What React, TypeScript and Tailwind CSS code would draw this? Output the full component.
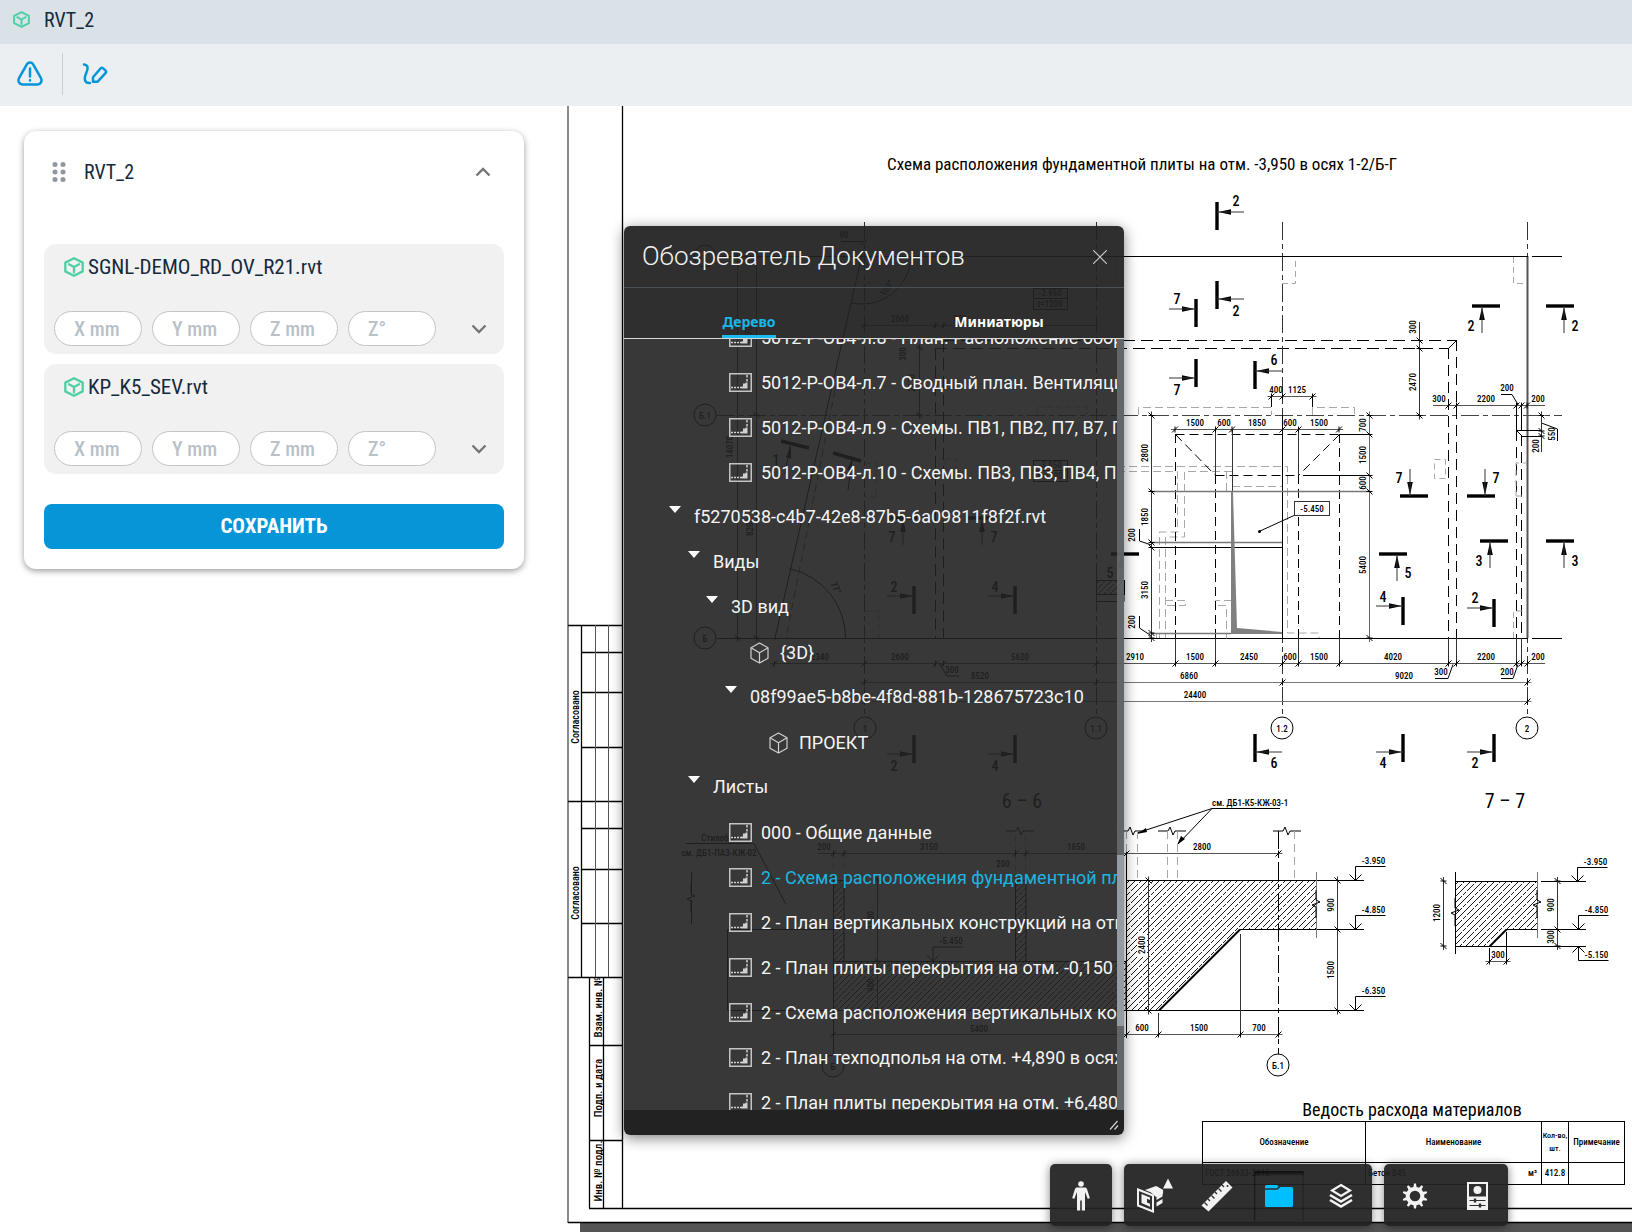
import React from 'react';

type Pt = [number, number];

/* ---------- small icons ---------- */

function Cube({ className }: { className: string }) {
  return (
    <svg viewBox="0 0 20 20" className={className} fill="none" stroke="#4fcfa5" strokeWidth="2.3" strokeLinejoin="round" strokeLinecap="round" aria-hidden="true">
      <path d="M10 1.2 18.700 5.600v8.800L10 18.800 1.300 14.400V5.600Z" />
      <path d="M5 7.300 10 10l5-2.700M10 10v5.500" />
    </svg>
  );
}

function Chevron({ up }: { up?: boolean }) {
  return (
    <svg viewBox="0 0 16 10" className="h-[10px] w-4" fill="none" stroke="#757575" strokeWidth="2.4" aria-hidden="true">
      <path d={up ? 'M1.5 8.5 8 2l6.5 6.5' : 'M1.5 1.5 8 8l6.5-6.5'} />
    </svg>
  );
}

function SheetIcon() {
  return (
    <svg viewBox="0 0 23 19" className="mb-px h-[19px] w-[23px] shrink-0" fill="none" aria-hidden="true">
      <rect x="0.75" y="0.75" width="21.5" height="17.5" stroke="#c4c4c4" strokeWidth="1.5" />
      <path d="M2 14.500h11" stroke="#d0d0d0" strokeWidth="1.5" strokeDasharray="2 1" />
      <path d="M18 2v7" stroke="#d0d0d0" strokeWidth="1.5" strokeDasharray="2.500 1.500" />
      <path d="M18.500 9.500v6h-6v-2h1.500v-3h2.500v-1Z" fill="#d0d0d0" />
    </svg>
  );
}

function ModelIcon() {
  return (
    <svg viewBox="0 0 19 22" className="h-[22px] w-[19px] shrink-0" fill="none" stroke="#d0d0d0" strokeWidth="1.2" strokeLinejoin="round" aria-hidden="true">
      <path d="M9.5 1 18 5.8v10.4L9.5 21 1 16.2V5.8Z" />
      <path d="m1 5.8 8.5 5L18 5.8M9.5 10.8V21" />
    </svg>
  );
}

/* ---------- drawing primitives ---------- */

function L({ d, c = '#000', w = 1, dash }: { d: string; c?: string; w?: number; dash?: string }) {
  return <path d={d} stroke={c} strokeWidth={w} strokeDasharray={dash} fill="none" />;
}

function Tx({ x, y, s = 9, v, children }: { x: number; y: number; s?: number; v?: boolean | number; children: React.ReactNode }) {
  const angle = v === true ? -90 : v || 0;
  return (
    <text x={x} y={y} fontSize={s} fontWeight={s > 15 ? 400 : 500} textAnchor="middle" dominantBaseline="central" transform={angle ? `rotate(${angle} ${x} ${y})` : undefined}>
      {children}
    </text>
  );
}

function HDim({ y, at, from, to, c = '#555' }: { y: number; at: number[]; from?: number; to?: number; c?: string }) {
  return (
    <g>
      <L d={`M${from ?? at[0] - 4} ${y}H${to ?? at[at.length - 1] + 4}`} c={c} />
      <L d={at.map((x) => `M${x - 3} ${y + 3}l6 -6M${x} ${y - 3}v6`).join('')} w={1} />
    </g>
  );
}

function VDim({ x, at, from, to, c = '#333' }: { x: number; at: number[]; from?: number; to?: number; c?: string }) {
  return (
    <g>
      <L d={`M${x} ${from ?? at[0] - 4}V${to ?? at[at.length - 1] + 4}`} c={c} />
      <L d={at.map((y) => `M${x - 3} ${y - 3}l6 6M${x - 3} ${y}h6`).join('')} w={1} />
    </g>
  );
}

/* Section cut mark: thick bar, thin shaft and solid arrow head touching the bar. */
function Cut({ bar, dir, label, at, off = 0 }: { bar: Pt; dir: 'left' | 'right' | 'up' | 'down'; label: string; at: Pt; off?: number }) {
  const rot = { left: 0, up: 90, right: 180, down: 270 }[dir];
  const upright = dir === 'left' || dir === 'right';
  const [x, y] = bar;
  const ax = upright ? x : x + off;
  const ay = upright ? y + off : y;
  return (
    <g>
      <L d={upright ? `M${x} ${y - 14}v28` : `M${x - 14} ${y}h28`} w={3.4} />
      <g transform={`rotate(${rot} ${ax} ${ay})`}>
        <path d={`M${ax + 1} ${ay}l13 -2.8v5.6Z`} />
        <L d={`M${ax} ${ay}h27`} c="#333" />
      </g>
      <Tx x={at[0]} y={at[1]} s={14}>{label}</Tx>
    </g>
  );
}

function Axis({ x, y, label }: { x: number; y: number; label: string }) {
  return (
    <g>
      <circle cx={x} cy={y} r="11" fill="none" stroke="#000" />
      <Tx x={x} y={y + 0.5} s={9}>{label}</Tx>
    </g>
  );
}

function Level({ x, y, label, flip }: { x: number; y: number; label: string; flip?: boolean }) {
  const k = flip ? -1 : 1;
  return (
    <g>
      <L d={`M${x - 6} ${y - 6 * k}l6 ${6 * k}l6 ${-6 * k}M${x} ${y}v${-14 * k}h30`} />
      <Tx x={x + 18} y={flip ? y + 8 : y - 20}>{label}</Tx>
    </g>
  );
}

function Break({ x, y, v }: { x: number; y: number; v?: boolean }) {
  return (
    <g transform={v ? `rotate(90 ${x} ${y})` : undefined}>
      <L d={`M${x - 14} ${y}h10l2 -4l3 8l2 -4h11`} />
    </g>
  );
}

const GRAY = '#a8a8a8';
const AX = '18 4 5 4';

function PlanLeft() {
  return (
    <g>
      <L d="M717 256.5H1282M717 638.5H1282" />
      <L d="M717 415.5H1562" dash={AX} c="#444" />
      <Axis x={705} y={256} label="Г" />
      <Axis x={705} y={415} label="Б.1" />
      <Axis x={705} y={638} label="Б" />
      <L d="M863 250 774.6 640" />
      <L d="M835 390 786 638" c="#555" dash="8 4" />
      <VDim x={737.5} at={[256, 638]} />
      <VDim x={756.5} at={[256, 415, 638]} />
      <L d="M911 256A49 49 0 0 1 852 303" />
      <L d="M789.7 568.7A71 71 0 0 1 845.6 638" />
      <Tx x={887} y={288} v={-55}>103°</Tx>
      <Tx x={836} y={588} v={60}>77°</Tx>
      <Tx x={844} y={235}>90</Tx>
      <L d="M841 241.5h25M861 245l6-6" />
      <HDim y={325.5} at={[864.5, 935.5, 943.5]} to={1096} />
      <Tx x={900} y={319}>2600</Tx>
      <Tx x={960} y={319}>300</Tx>
      {[288, 460].map((y) => (
        <g key={y}>
          <rect x="1033.5" y={y + 0.5} width="34" height="21" fill="none" stroke="#000" />
          <L d={`M1033 ${y + 10.5}h34`} />
          <Tx x={1050} y={y + 5}>-3.950</Tx>
          <Tx x={1050} y={y + 16}>t=1200</Tx>
        </g>
      ))}
      <L d="M943 340.5H1456M935 348.5H1448M935.5 348V638M943.5 340V638" dash="12 6" />
      <VDim x={919.5} at={[348, 415]} />
      <Tx x={903} y={354} v>300</Tx>
      <Tx x={912} y={383} v>2470</Tx>
      <Tx x={730} y={447} v>14070</Tx>
      <Tx x={749} y={335} v>5870</Tx>
      <Tx x={750} y={527} v>8200</Tx>
      <L d="M781 441l28 7M833 453l28 8" w={3.4} />
      <L d="M790 446l-5 28M852 460l-4 30" />
      <path d="M791 446l-5 11 5 2ZM852 459l-5 11 5 2Z" />
      <Tx x={776} y={460} s={14}>1</Tx>
      <L d="M865 463h11v34h-11M945 459h11v10h-11ZM865 283h15v-26M1101 283h15v-26M1037 415v-8h50v8M865 611h14v27" c={GRAY} dash="6 3" />
      <Cut bar={[903, 518]} dir="up" label="7" at={[892, 537]} />
      <Cut bar={[982, 518]} dir="up" label="7" at={[994, 537]} />
      <Cut bar={[914, 600]} dir="right" off={-4} label="2" at={[894, 587]} />
      <Cut bar={[1015, 600]} dir="right" off={-4} label="4" at={[995, 587]} />
      <Cut bar={[914, 749]} dir="right" off={5} label="2" at={[894, 766]} />
      <Cut bar={[1015, 749]} dir="right" off={5} label="4" at={[995, 766]} />
      <Tx x={820} y={657}>2340</Tx>
      <Tx x={900} y={657}>2600</Tx>
      <Tx x={952} y={670}>300</Tx>
      <L d="M939 663l8 13h12" />
      <Tx x={1020} y={657}>5620</Tx>
      <Tx x={980} y={676}>8520</Tx>
      <rect x="1096.500" y="580.500" width="28" height="14" fill="url(#hatch)" stroke="#000" />
      <L d="M1096 601.5h28v-8" />
    </g>
  );
}

function PlanRight() {
  return (
    <g>
      {/* grid axes */}
      {[864.5, 1096.5, 1282.5, 1527.5].map((x) => (
        <L key={x} d={`M${x} 222V717`} dash={AX} c="#333" />
      ))}
      <L d="M1527.5 256V638" c="#555" w={2} />
      <Axis x={865} y={728} label="1" />
      <Axis x={1096} y={728} label="1.1" />
      <Axis x={1282} y={728} label="1.2" />
      <Axis x={1527} y={728} label="2" />
      <L d="M1282 256.5H1528M1532 256.5H1562M1282 638.5H1528M1532 638.5H1562" />
      <L d="M1282.5 415V638" />

      {/* hidden contours */}
      <L d="M1448.5 348V663M1456.5 340V663M1516.5 430V638M1521.5 435V638" dash="11 6" />
      <L d="M1516.5 405V430M1521.5 405V430M1448.5 348.5l8-8" />
      <L d="M1138.5 415v-7.500h133v7.500M1312.5 415v-7.500h42v7.500M1117 466.500h170.500V633H1319v5M1117 471.500h60.500V532h-18v106M1232 471.500h-47.500V537h-19v101M1165 600.500h20.500v5h-20M1226.500 471v20M1232 486.500h50M1232 600.500h-16.500v5h11v33M1156.500 638v-5" c={GRAY} dash="8 4" />
      <L d="M1434.500 459.500h11v19h-11ZM1516 496v-33h11M1516 496h11M1513.500 638v-27h13M1282 283.500h13.500v-26M1513.500 257v26.500h13" c={GRAY} dash="6 4" />
      <L d="M1175.500 434.500H1339.500M1215.500 475.500H1298.500M1175.500 434.500l40 41M1339.500 434.500l-41 41M1175.500 434V638M1215.500 475V638M1298.500 475V638M1339.500 434V638" dash="9 5" />
      <L d="M1175.500 638v25M1215.500 638v25M1298.500 638v25M1339.500 638v25M1448.500 638v25M1456.500 638v25M1516.500 638v25M1521.500 638v25M1215.500 429v46M1298.500 429v46M1232.500 429v62" c="#333" />
      <L d="M1151 491.500h218M1151 542.500h131M1151 633.500h80" c="#777" w={1.500} />
      <L d="M1151 547.500h131M1339 434.500h30M1303 475.500h66" />
      <path d="M1231 492h2l4 136 45 4v2h-51Z" fill="#808080" />

      {/* dimensions */}
      <VDim x={1151.500} at={[415.500, 491.500, 542.500, 547.500, 633, 638]} />
      <Tx x={1145} y={453} v>2800</Tx>
      <Tx x={1145} y={517} v>1850</Tx>
      <Tx x={1145} y={590} v>3150</Tx>
      <Tx x={1132} y={535} v>200</Tx>
      <Tx x={1132} y={622} v>200</Tx>
      <L d="M1139.500 529v12l12 4M1139.500 616v12l12 8" />
      <HDim y={429.500} at={[1175, 1215.500, 1232, 1282.500, 1298.500, 1339]} />
      <Tx x={1195} y={423}>1500</Tx>
      <Tx x={1224} y={423}>600</Tx>
      <Tx x={1257} y={423}>1850</Tx>
      <Tx x={1290} y={423}>600</Tx>
      <Tx x={1319} y={423}>1500</Tx>
      <HDim y={396.500} at={[1271.500, 1282.500, 1312.500]} />
      <L d="M1271.500 396v11M1312.500 396v11" />
      <Tx x={1276} y={390}>400</Tx>
      <Tx x={1297} y={390}>1125</Tx>
      <VDim x={1369.500} at={[415.500, 434.500, 475.500, 491.500, 638]} c="#666" />
      <Tx x={1363} y={425} v>700</Tx>
      <Tx x={1363} y={455} v>1500</Tx>
      <Tx x={1363} y={483} v>600</Tx>
      <Tx x={1363} y={565} v>5400</Tx>
      <VDim x={1419.500} at={[340.500, 348.500, 415.500]} from={322} />
      <Tx x={1413} y={327} v>300</Tx>
      <Tx x={1413} y={382} v>2470</Tx>
      <HDim y={405.500} at={[1448.500, 1456.500, 1516.500, 1521.500, 1527]} from={1433} to={1545} />
      <Tx x={1439} y={399}>300</Tx>
      <Tx x={1486} y={399}>2200</Tx>
      <Tx x={1507} y={388}>200</Tx>
      <Tx x={1538} y={399}>200</Tx>
      <L d="M1501 394.500h11l6 10M1516 430.500h26M1521 436.500h21M1516 430l6 6M1541.500 423l16 6v12" />
      <VDim x={1541.500} at={[415.500, 431, 436]} to={452} />
      <Tx x={1552} y={434} v>550</Tx>
      <Tx x={1536} y={446} v>200</Tx>
      <rect x="1294.500" y="501.500" width="35" height="14" fill="#fff" stroke="#333" />
      <Tx x={1312} y={509}>-5.450</Tx>
      <L d="M1294 515.500l-35 16" />
      <circle cx="1259.500" cy="531.500" r="1.500" />

      <HDim y={663.500} at={[774.500, 864.500, 935.500, 943.500, 1096.500, 1175.500, 1215.500, 1282.500, 1298.500, 1339.500, 1448.500, 1456.500, 1516.500, 1521.500, 1527.500]} to={1545} />
      <HDim y={682.500} at={[864.500, 1096.500, 1282.500, 1527.500]} c="#777" />
      <HDim y={701.500} at={[864.500, 1527.500]} c="#777" />
      <Tx x={1135} y={657}>2910</Tx>
      <Tx x={1195} y={657}>1500</Tx>
      <Tx x={1249} y={657}>2450</Tx>
      <Tx x={1290} y={657}>600</Tx>
      <Tx x={1319} y={657}>1500</Tx>
      <Tx x={1393} y={657}>4020</Tx>
      <Tx x={1486} y={657}>2200</Tx>
      <Tx x={1538} y={657}>200</Tx>
      <Tx x={1441} y={672}>300</Tx>
      <Tx x={1507} y={672}>200</Tx>
      <L d="M1435 678.500h13l5 -14M1501 678.500h12l5 -14" />
      <Tx x={1189} y={676}>6860</Tx>
      <Tx x={1404} y={676}>9020</Tx>
      <Tx x={1195} y={695}>24400</Tx>

      {/* section marks */}
      <Cut bar={[1217, 216]} dir="left" off={-4} label="2" at={[1236, 201]} />
      <Cut bar={[1217, 295]} dir="left" off={4} label="2" at={[1236, 311]} />
      <Cut bar={[1196, 313]} dir="right" off={-4} label="7" at={[1177, 299]} />
      <Cut bar={[1196, 373]} dir="right" off={5} label="7" at={[1177, 390]} />
      <Cut bar={[1255, 375]} dir="left" off={-4} label="6" at={[1274, 360]} />
      <Cut bar={[1486, 306]} dir="up" off={-4} label="2" at={[1471, 326]} />
      <Cut bar={[1560, 306]} dir="up" off={4} label="2" at={[1575, 326]} />
      <Cut bar={[1414, 496]} dir="down" off={-4} label="7" at={[1399, 478]} />
      <Cut bar={[1481, 496]} dir="down" off={4} label="7" at={[1496, 478]} />
      <Cut bar={[1494, 541]} dir="up" off={-4} label="3" at={[1479, 561]} />
      <Cut bar={[1560, 541]} dir="up" off={4} label="3" at={[1575, 561]} />
      <Cut bar={[1125, 554]} dir="up" off={-4} label="5" at={[1110, 573]} />
      <Cut bar={[1393, 554]} dir="up" off={4} label="5" at={[1408, 573]} />
      <Cut bar={[1403, 611]} dir="right" off={-5} label="4" at={[1383, 597]} />
      <Cut bar={[1494, 613]} dir="right" off={-5} label="2" at={[1475, 598]} />
      <Cut bar={[1255, 748]} dir="left" off={4} label="6" at={[1274, 763]} />
      <Cut bar={[1403, 748]} dir="right" off={4} label="4" at={[1383, 763]} />
      <Cut bar={[1494, 748]} dir="right" off={4} label="2" at={[1475, 763]} />
    </g>
  );
}

function Sections() {
  return (
    <g>
      <Tx x={1022} y={801} s={20}>6 – 6</Tx>
      <Tx x={1505} y={801} s={20}>7 – 7</Tx>

      {/* section 6-6 */}
      <Tx x={719} y={838}>Стилобат</Tx>
      <Tx x={719} y={853}>см. ДБ1-ПАЗ-КЖ-02</Tx>
      <L d="M686 843.500h68l32 61M691.500 872v24M691.500 900v24" />
      <Break x={691} y={898} v />
      <L d="M833 929.500H727.500V1010.500H833" />
      <rect x="833.500" y="880.500" width="10.500" height="81" fill="url(#hatch)" stroke="#000" />
      <rect x="1015.500" y="880.500" width="10.500" height="81" fill="url(#hatch)" stroke="#000" />
      <path d="M833.500 961.500H1126V1010.500H833.500Z" fill="url(#hatch)" stroke="#000" />
      <L d="M833.500 853v27M844 853v27M1015.500 835v45M1025.500 835v45" c={GRAY} dash="6 4" />
      <HDim y={853.500} at={[833.500, 844, 1015.500, 1026, 1126.500, 1278.500]} from={818} />
      <Break x={1020} y={831} />
      <Tx x={824} y={847}>200</Tx>
      <Tx x={929} y={847}>3150</Tx>
      <Tx x={1003} y={864}>200</Tx>
      <Tx x={1076} y={847}>1850</Tx>
      <Tx x={1202} y={847}>2800</Tx>
      <VDim x={877.500} at={[880, 961, 1010]} />
      <Tx x={871} y={920} v>1500</Tx>
      <Tx x={871} y={985} v>900</Tx>
      <Level x={933} y={961} label="-5.450" />
      <L d="M833.500 1010V1055M1126.500 853V1038" />
      <Axis x={833} y={1066} label="Б" />
      <Tx x={979} y={1029}>5400</Tx>

      <text x="1212" y="806" fontSize="9" fontWeight="500">см. ДБ1-К5-КЖ-03-1</text>
      <L d="M1280 808.500H1212L1137 833M1212 808.500 1178 844" />
      <path d="M1137 834l9-6 1 4ZM1177 845l4-9 4 3Z" />
      <Break x={1132} y={831} />
      <Break x={1172} y={831} />
      <Break x={1287} y={831} />
      <L d="M1126.500 831v22M1137.500 831v49M1167.500 831v49M1177.500 831v49M1294.500 831v49" c={GRAY} dash="8 5" />
      <path d="M1126.500 880.500H1316.500V929.500H1240L1159 1010.500H1126.500Z" fill="url(#hatch)" />
      <rect x="1137" y="933" width="10" height="24" fill="#fff" />
      <L d="M1126 880.500H1364M1240 929.500H1364M1126 1010.500H1364" />
      <L d="M1240 929.500 1159 1010.500" w={2} />
      <L d="M1316.500 872v66" c="#777" />
      <Break x={1316} y={904} v />
      <L d="M1278.500 831V1054" dash={AX} />
      <L d="M1240.500 934v102M1158.500 1013v23" c="#333" />
      <VDim x={1148.500} at={[880.500, 1010.500]} />
      <Tx x={1142} y={945} v>2400</Tx>
      <VDim x={1337.500} at={[880.500, 929.500, 1010.500]} />
      <Tx x={1331} y={905} v>900</Tx>
      <Tx x={1331} y={970} v>1500</Tx>
      <HDim y={1034.500} at={[833.500, 1126.500, 1158.500, 1240.500, 1278.500]} />
      <Tx x={1142} y={1028}>600</Tx>
      <Tx x={1199} y={1028}>1500</Tx>
      <Tx x={1259} y={1028}>700</Tx>
      <Axis x={1278} y={1065} label="Б.1" />
      <Level x={1355.500} y={880.500} label="-3.950" />
      <Level x={1355.500} y={929.500} label="-4.850" />
      <Level x={1355.500} y={1010.500} label="-6.350" />

      {/* section 7-7 */}
      <path d="M1455.500 881.500H1537.500V929.500H1506.500L1489.500 946.500H1455.500Z" fill="url(#hatch)" />
      <L d="M1455 881.500H1538M1541 881.500h45M1506 929.500H1538M1541 929.500h45M1455 946.500h131M1455.500 872v82" />
      <L d="M1506.500 929.500l-17 17" w={2} />
      <L d="M1537.500 872v66" c="#777" />
      <Break x={1455} y={912} v />
      <Break x={1537} y={904} v />
      <VDim x={1443.500} at={[881, 946]} />
      <Tx x={1437} y={913} v>1200</Tx>
      <VDim x={1557.500} at={[881, 929.500, 946]} />
      <Tx x={1551} y={905} v>900</Tx>
      <Tx x={1551} y={937} v>300</Tx>
      <HDim y={961.500} at={[1489.500, 1506.500]} />
      <L d="M1489.500 948v13M1506.500 932v29" />
      <Tx x={1498} y={955}>300</Tx>
      <Level x={1577.500} y={881.500} label="-3.950" />
      <Level x={1578.500} y={929.500} label="-4.850" />
      <Level x={1578.500} y={946.500} label="-5.150" flip />
    </g>
  );
}

function SheetFrame() {
  return (
    <g>
      <rect x="580" y="1223" width="1052" height="9" fill="#545454" />
      <L d="M568 106V1223" c="#8a8a8a" w={2} />
      <L d="M568 1222.500H1632M589 1208.500H1632M622.500 106V1208.500" w={1.300} />
      <L d="M581.500 625V977M589.500 977V1208M603.500 977V1208M568 625.500h54M568 801.500h54M568 977.500h54M581 652.500h41M581 692.500h41M581 747.500h41M581 828.500h41M581 869.500h41M581 923.500h41M589 1045.500h33M589 1140.500h33" w={1.300} />
      <L d="M595.500 625V977M608.500 625V977" c="#555" />
      <Tx x={575} y={717} s={10} v>Согласовано</Tx>
      <Tx x={575} y={893} s={10} v>Согласовано</Tx>
      <Tx x={598} y={1007} s={11} v>Взам. инв. №</Tx>
      <Tx x={598} y={1088} s={11} v>Подп. и дата</Tx>
      <Tx x={598} y={1171} s={11} v>Инв. № подл.</Tx>
      <Tx x={1142} y={164} s={17}>Схема расположения фундаментной плиты на отм. -3,950 в осях 1-2/Б-Г</Tx>
      <Tx x={1412} y={1109} s={18}>Ведость расхода материалов</Tx>
    </g>
  );
}

function MaterialsTable() {
  return (
    <foreignObject x="1202" y="1121" width="423" height="66">
      <table className="w-full table-fixed border-collapse text-center text-[9px] leading-[13px] font-medium text-black">
        <colgroup>
          <col className="w-[163px]" />
          <col className="w-[176px]" />
          <col className="w-[27px]" />
          <col />
        </colgroup>
        <thead>
          <tr className="h-[41px]">
            <th className="border border-black p-0 font-medium">Обозначение</th>
            <th className="border border-black p-0 font-medium">Наименование</th>
            <th className="border border-black p-0 text-[8px] font-medium whitespace-nowrap">
              Кол-во,
              <br />
              шт.
            </th>
            <th className="border border-black p-0 font-medium">Примечание</th>
          </tr>
        </thead>
        <tbody>
          <tr className="h-[22px]">
            <td className="border border-black px-[2px] py-0 text-left">ГОСТ 26633-2015</td>
            <td className="border border-black px-[2px] py-0">
              <span className="flex justify-between pr-[2px]">
                <span>Бетон B45</span>
                <span>м³</span>
              </span>
            </td>
            <td className="border border-black p-0">412.8</td>
            <td className="border border-black p-0" />
          </tr>
        </tbody>
      </table>
    </foreignObject>
  );
}

function Drawing() {
  return (
    <svg viewBox="548 106 1084 1126" preserveAspectRatio="xMinYMin meet" className="absolute inset-0 h-full w-full font-['Roboto_Condensed',sans-serif]">
      <defs>
        <pattern id="hatch" width="12" height="12" patternUnits="userSpaceOnUse">
          <path d="M-1 13 13 -1M-1 1 1 -1M11 13 13 11" stroke="#000" strokeWidth="0.900" />
          <path d="M-1 7 2 4M3 3 7 -1M5 13 10 8M11 7 13 5" stroke="#000" strokeWidth="0.900" />
        </pattern>
      </defs>
      <SheetFrame />
      <PlanLeft />
      <PlanRight />
      <Sections />
      <MaterialsTable />
    </svg>
  );
}

/* ---------- document browser ---------- */

type Row = { kind: 'group' | 'model' | 'sheet'; label: string; pad: string; active?: boolean };

const rows: Row[] = [
  { kind: 'sheet', pad: 'pl-[105px]', label: '5012-Р-ОВ4-л.8 - План. Расположение оборудования' },
  { kind: 'sheet', pad: 'pl-[105px]', label: '5012-Р-ОВ4-л.7 - Сводный план. Вентиляция' },
  { kind: 'sheet', pad: 'pl-[105px]', label: '5012-Р-ОВ4-л.9 - Схемы. ПВ1, ПВ2, П7, В7, ПВ8' },
  { kind: 'sheet', pad: 'pl-[105px]', label: '5012-Р-ОВ4-л.10 - Схемы. ПВ3, ПВ3, ПВ4, ПВ5' },
  { kind: 'group', pad: 'pl-[45px]', label: 'f5270538-c4b7-42e8-87b5-6a09811f8f2f.rvt' },
  { kind: 'group', pad: 'pl-[64px]', label: 'Виды' },
  { kind: 'group', pad: 'pl-[82px]', label: '3D вид' },
  { kind: 'model', pad: 'pl-[126px]', label: '{3D}' },
  { kind: 'group', pad: 'pl-[101px]', label: '08f99ae5-b8be-4f8d-881b-128675723c10' },
  { kind: 'model', pad: 'pl-[145px]', label: 'ПРОЕКТ' },
  { kind: 'group', pad: 'pl-[64px]', label: 'Листы' },
  { kind: 'sheet', pad: 'pl-[105px]', label: '000 - Общие данные' },
  { kind: 'sheet', pad: 'pl-[105px]', label: '2 - Схема расположения фундаментной плиты', active: true },
  { kind: 'sheet', pad: 'pl-[105px]', label: '2 - План вертикальных конструкций на отм. -3,950' },
  { kind: 'sheet', pad: 'pl-[105px]', label: '2 - План плиты перекрытия на отм. -0,150' },
  { kind: 'sheet', pad: 'pl-[105px]', label: '2 - Схема расположения вертикальных конструкций' },
  { kind: 'sheet', pad: 'pl-[105px]', label: '2 - План техподполья на отм. +4,890 в осях' },
  { kind: 'sheet', pad: 'pl-[105px]', label: '2 - План плиты перекрытия на отм. +6,480' },
];

const rowKind = {
  group: 'gap-[13px] pb-[2px]',
  model: 'gap-[11px]',
  sheet: 'gap-[9px]',
};

function TreeRow({ row }: { row: Row }) {
  return (
    <li className={`flex h-[45px] items-center whitespace-nowrap ${row.pad} ${rowKind[row.kind]} ${row.active ? 'text-[#1cb5e0]' : 'text-[#f4f4f4]'}`}>
      {row.kind === 'group' && (
        <button type="button" aria-label={`Свернуть ${row.label}`} className="mb-[14px] w-3 shrink-0">
          <svg viewBox="0 0 12 7" className="h-[7px] w-3" aria-hidden="true">
            <path d="M0 0h12L6 7Z" fill="#fff" />
          </svg>
        </button>
      )}
      {row.kind === 'model' && <ModelIcon />}
      {row.kind === 'sheet' && <SheetIcon />}
      <span>{row.label}</span>
    </li>
  );
}

function DocumentBrowser() {
  return (
    <section className="absolute top-[120px] left-[76px] flex h-[909px] w-[500px] flex-col overflow-hidden rounded-[6px] font-['Roboto',sans-serif] text-[18px] leading-[24px] shadow-[0_3px_14px_rgba(0,0,0,0.5)]">
      <header className="flex h-[62px] shrink-0 items-center justify-between border-b border-[#4a5156] bg-[#222]/94 pr-4 pl-[18px]">
        <h2 className="pb-[2px] text-[26px] leading-[32px] font-light text-[#f2f2f2]">Обозреватель Документов</h2>
        <button type="button" aria-label="Закрыть" className="p-px">
          <svg viewBox="0 0 14 14" className="h-[14px] w-[14px]" stroke="#c4c4c4" strokeWidth="1.2" aria-hidden="true">
            <path d="m0 0 14 14M14 0 0 14" />
          </svg>
        </button>
      </header>
      <div role="tablist" className="flex h-[51px] shrink-0 items-end border-b border-[#d8d8d8] bg-[#222]/94 font-['Noto_Sans',sans-serif] text-[14px] leading-[22px] font-bold">
        <div className="flex flex-1 justify-center">
          <button type="button" role="tab" aria-selected="true" className="border-b-3 border-[#1cbcf2] pb-[2px] text-[#1cb5e8]">Дерево</button>
        </div>
        <div className="flex flex-1 justify-center">
          <button type="button" role="tab" aria-selected="false" className="border-b-3 border-transparent pb-[2px] text-white">Миниатюры</button>
        </div>
      </div>
      <div className="flex min-h-0 flex-1 bg-[#222]/90">
        <ul className="-mt-6 min-w-0 flex-1 [clip-path:inset(24px_0_0_0)]">
          {rows.map((r, i) => (
            <TreeRow key={i} row={r} />
          ))}
        </ul>
        <div className="flex w-[7px] shrink-0 flex-col bg-[#6b7277]/80">
          <div className="mt-[516px] h-[171px] bg-[#949ba3]" />
        </div>
      </div>
      <footer className="z-10 flex h-[25px] shrink-0 items-end justify-end bg-[#222] p-[5px]">
        <svg viewBox="0 0 10 10" className="h-[10px] w-[10px]" stroke="#d0d0d0" strokeWidth="1.2" aria-hidden="true">
          <path d="M1 9.500 8.500 1M5.500 9.500 9 5.500" />
        </svg>
      </footer>
    </section>
  );
}

/* ---------- viewer toolbar ---------- */

const tool = 'flex h-[62px] w-[62px] items-center justify-center pt-[2px]';
const group = 'flex rounded-[5px] bg-[#222]/94 shadow-[0_1px_10px_rgba(0,0,0,0.5)]';

function ViewerToolbar() {
  const gear = Array.from({ length: 10 }, (_, i) => i * 36);
  return (
    <nav aria-label="Инструменты просмотра" className="absolute bottom-[6px] left-[502px] flex gap-3">
      <div className={group}>
        <button type="button" aria-label="От первого лица" className={tool}>
          <svg viewBox="0 0 18 30" className="h-[30px] w-[18px]" fill="#f2f2f2" aria-hidden="true">
            <circle cx="9" cy="3" r="2.800" />
            <path d="M5 6.500h8c1 0 1.600.6 2 1.600L17.800 17l-2 1L13 11v7.500V29.500H9.800V19.500H8.200V29.500H5V11L2.200 18l-2-1L3 8.100c.4-1 1-1.600 2-1.600Z" />
          </svg>
        </button>
      </div>
      <div className={group}>
        <button type="button" aria-label="Сечение" className={tool}>
          <svg viewBox="0 0 36 36" className="h-9 w-9" fill="#f2f2f2" aria-hidden="true">
            <path d="m26 10.500 5-10 5 10Z" />
            <path d="m8 12 11-4 7.500 4.500-6.500 4.500Z" />
            <path d="m19.500 18.500 6-3.500v3.500l-6 3.500ZM19.500 24.500l6-3.500v4l-6 3.500Z" />
            <path d="m20 8.500 6 3.500v4l-7 3-5-4.500Z" />
            <path d="M1 11.500 16 17.500v16L1 27.500Z" fill="#2f2f2f" stroke="#f2f2f2" strokeWidth="2" />
            <path d="m4.500 16 8.500 3.500v2.500l-3-1.200v3.700l3 1.200v3L4.500 25Z" />
          </svg>
        </button>
        <button type="button" aria-label="Измерение" className={tool}>
          <svg viewBox="0 0 32 32" className="h-8 w-8" aria-hidden="true">
            <path d="M.500 25.500 25 1l6.500 6.500L7.500 31.500Z" fill="#f2f2f2" />
            <path d="m3.500 22.500 3 3M7 19l2 2M10.500 15.500l3 3M14 12l2 2M17.500 8.500l3 3M21 5l2 2" stroke="#2f2f2f" strokeWidth="1.400" />
            <circle cx="26.500" cy="6" r="1" fill="#2f2f2f" />
          </svg>
        </button>
        <button type="button" aria-label="Обозреватель документов" aria-pressed="true" className={tool}>
          <span className="flex h-[50px] w-[50px] items-center justify-center rounded-[2px] shadow-[inset_0_3px_3px_rgba(0,0,0,0.6),inset_1px_0_1px_rgba(0,0,0,0.3)]">
            <svg viewBox="0 0 28 22" className="h-[22px] w-7" fill="#00bfff" aria-hidden="true">
              <path d="M1.500 0H12l1.500 1.500L12 3.300H0V1.500C0 .6.600 0 1.500 0Z" />
              <path d="M0 4.800h12.500L15.500 2h11c.9 0 1.500.6 1.500 1.500v17c0 .9-.6 1.500-1.500 1.500h-25C.600 22 0 21.400 0 20.500Z" />
            </svg>
          </span>
        </button>
        <button type="button" aria-label="Слои" className={tool}>
          <svg viewBox="0 0 24 26" className="h-[26px] w-6" aria-hidden="true">
            <path d="M12 2 21 7.500 12 13 3 7.500Z" fill="none" stroke="#f2f2f2" strokeWidth="2.200" />
            <path d="M1 12 12 18.500l11-6.500M1 17 12 23.500l11-6.500" fill="none" stroke="#f2f2f2" strokeWidth="2.600" />
          </svg>
        </button>
      </div>
      <div className={group}>
        <button type="button" aria-label="Настройки" className={tool}>
          <svg viewBox="0 0 26 26" className="h-[26px] w-[26px]" aria-hidden="true">
            <circle cx="13" cy="13" r="7.300" fill="none" stroke="#f2f2f2" strokeWidth="4" />
            {gear.map((a) => (
              <path key={a} d="M11.300 5 12 0.500h2L14.700 5Z" fill="#f2f2f2" transform={`rotate(${a} 13 13)`} />
            ))}
          </svg>
        </button>
        <button type="button" aria-label="Свойства модели" className={tool}>
          <svg viewBox="0 0 21 28" className="h-7 w-[21px]" aria-hidden="true">
            <rect width="21" height="28" fill="#f2f2f2" />
            <rect x="2" y="2" width="17" height="12.500" fill="#2f2f2f" />
            <circle cx="10.500" cy="8" r="4" fill="#f2f2f2" />
            <path d="M2.500 18.500h16M2.500 23.500h16" stroke="#2f2f2f" strokeWidth="1.200" />
            <path d="M8 16.500v4M13 21.500v4" stroke="#2f2f2f" strokeWidth="2.400" />
          </svg>
        </button>
      </div>
    </nav>
  );
}

/* ---------- left panel ---------- */

function FileBox({ name }: { name: string }) {
  return (
    <div className="flex h-[110px] flex-col justify-between rounded-xl bg-[#f1f1f1] pt-[11px] pb-2">
      <div className="flex items-center gap-1 pl-5">
        <Cube className="h-5 w-5" />
        <span className="text-[21px] leading-6">{name}</span>
      </div>
      <div className="flex items-center gap-[10px] pr-[17px] pl-[10px]">
        {['X mm', 'Y mm', 'Z mm', 'Z°'].map((p) => (
          <input
            key={p}
            type="text"
            placeholder={p}
            aria-label={`${name} ${p}`}
            className="h-[35px] w-[88px] rounded-full border border-[#c4c4c4] bg-white pr-2 pl-[19px] font-medium placeholder:text-[#b9c1c9]"
          />
        ))}
        <button type="button" aria-label="Развернуть" className="ml-auto">
          <Chevron />
        </button>
      </div>
    </div>
  );
}

function LinksPanel() {
  return (
    <section className="rounded-xl bg-white px-5 pt-5 pb-5 shadow-[0_2px_6px_rgba(0,0,0,0.4)]">
      <div className="flex h-[42px] items-center pr-[13px] pl-2">
        <svg viewBox="0 0 14 20" className="h-5 w-[14px]" fill="#8f98a2" aria-hidden="true">
          {[2.500, 10, 17.500].map((y) => (
            <g key={y}>
              <circle cx="3" cy={y} r="2.500" />
              <circle cx="11" cy={y} r="2.500" />
            </g>
          ))}
        </svg>
        <h2 className="ml-[18px] leading-6">RVT_2</h2>
        <button type="button" aria-label="Свернуть" className="ml-auto">
          <Chevron up />
        </button>
      </div>
      <div className="mt-[51px] flex flex-col gap-[10px]">
        <FileBox name="SGNL-DEMO_RD_OV_R21.rvt" />
        <FileBox name="KP_K5_SEV.rvt" />
      </div>
      <button type="button" className="mt-[30px] h-[45px] w-full rounded-lg bg-[#0696d7] text-[21px] font-bold text-white">
        СОХРАНИТЬ
      </button>
    </section>
  );
}

export default function App() {
  return (
    <div className="flex h-screen flex-col overflow-hidden bg-white font-['Roboto_Condensed',sans-serif] text-[20px] text-[#15293d]">
      <header className="flex h-11 shrink-0 items-center gap-[14px] bg-[#dae1e7] pb-[5px] pl-[13px]">
        <Cube className="h-[17px] w-[17px]" />
        <h1 className="leading-6">RVT_2</h1>
      </header>
      <div role="toolbar" className="flex h-[62px] shrink-0 items-center bg-[#ebeff2] pb-[2px] pl-[17px]">
        <button type="button" aria-label="Предупреждения">
          <svg viewBox="0 0 26 26" className="h-[26px] w-[26px]" fill="none" stroke="#0696d7" strokeWidth="2.500" strokeLinecap="round" strokeLinejoin="round" aria-hidden="true">
            <path d="M10 3.200c1.300-2.200 4.700-2.200 6 0l8 14c1.400 2.800-.2 6.300-3.500 6.300h-15c-3.300 0-4.900-3.500-3.500-6.300Z" />
            <path d="M13 7.500v8M13 19.300v.3" />
          </svg>
        </button>
        <span className="mr-[19px] ml-[19px] h-[42px] w-px bg-[#c8ced4]" />
        <button type="button" aria-label="Рисование">
          <svg viewBox="0 0 26 22" className="h-[22px] w-[26px]" fill="none" stroke="#0696d7" strokeWidth="2.500" strokeLinecap="round" strokeLinejoin="round" aria-hidden="true">
            <path d="M2 1.500c4.500.5 4.200 4 2.200 8.500S1.500 20.500 8 20" />
            <path d="M11 14.200 18.700 5.300q1.100-1.100 2.200-.1l2.700 2.400q1.100 1.100.1 2.200L15.700 18.700H11Z" />
          </svg>
        </button>
      </div>
      <main className="flex min-h-0 flex-1">
        <aside className="w-[548px] shrink-0 pt-[25px] pr-6 pl-6">
          <LinksPanel />
        </aside>
        <div className="relative min-w-0 flex-1 overflow-hidden">
          <Drawing />
          <DocumentBrowser />
          <ViewerToolbar />
        </div>
      </main>
    </div>
  );
}
